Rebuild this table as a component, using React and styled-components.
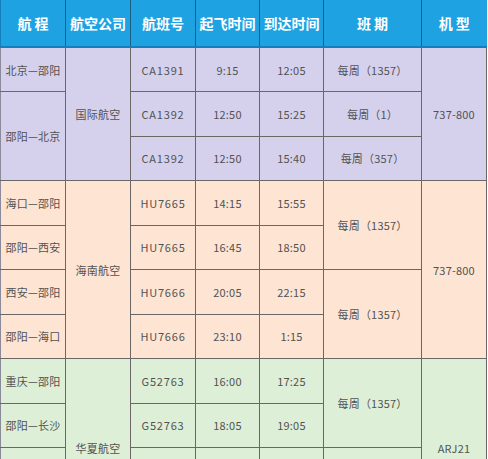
import React from "react";
import styled, { createGlobalStyle } from "styled-components";

const Global = createGlobalStyle`
  html, body { margin: 0; padding: 0; background: #ffffff; }
  body { width: 488px; height: 459px; overflow: hidden; }
`;

const tones = {
  head: "#1fa2e2",
  purple: "#d5d1ed",
  peach: "#fde4d3",
  green: "#ddefd6",
};

const Table = styled.table`
  border-collapse: collapse;
  table-layout: fixed;
  width: 486px;
  font-family: "Noto Sans CJK SC", "Noto Sans", sans-serif;
`;

const HeadRow = styled.tr`
  height: 47px;
`;

const HeadCell = styled.th`
  background: ${tones.head};
  color: #ffffff;
  font-size: 14px;
  font-weight: 700;
  text-align: center;
  padding: 0;
  border-left: 1px solid #1a5f86;
  border-bottom: 2px solid #1380bd;
  white-space: pre;
  &:first-child { border-left: 1px solid #137fbc; }
`;

const Row = styled.tr`
  height: 44.5px;
`;

const Cell = styled.td`
  background: ${(p) => tones[p.$tone]};
  color: #525252;
  font-size: 11px;
  letter-spacing: ${(p) => (p.$code ? "0.8px" : "0.2px")};
  text-align: center;
  vertical-align: middle;
  padding: 0;
  border: 1px solid #6b6766;
  white-space: nowrap;
  &:first-child { border-left: 1px solid #8a8a9a; }
`;

const cols = [65, 65, 65, 64, 64, 98, 65];
const headers = ["航 程", "航空公司", "航班号", "起飞时间", "到达时间", "班 期", "机 型"];

export default function App() {
  return (
    <>
      <Global />
      <Table>
        <colgroup>
          {cols.map((w, i) => (
            <col key={i} style={{ width: w }} />
          ))}
        </colgroup>
        <thead>
          <HeadRow>
            {headers.map((h) => (
              <HeadCell key={h}>{h}</HeadCell>
            ))}
          </HeadRow>
        </thead>
        <tbody>
          <Row>
            <Cell $tone="purple">北京—邵阳</Cell>
            <Cell $tone="purple" rowSpan={3}>国际航空</Cell>
            <Cell $tone="purple" $code>CA1391</Cell>
            <Cell $tone="purple">9:15</Cell>
            <Cell $tone="purple">12:05</Cell>
            <Cell $tone="purple">每周（1357）</Cell>
            <Cell $tone="purple" rowSpan={3}>737-800</Cell>
          </Row>
          <Row>
            <Cell $tone="purple" rowSpan={2}>邵阳—北京</Cell>
            <Cell $tone="purple" $code>CA1392</Cell>
            <Cell $tone="purple">12:50</Cell>
            <Cell $tone="purple">15:25</Cell>
            <Cell $tone="purple">每周（1）</Cell>
          </Row>
          <Row>
            <Cell $tone="purple" $code>CA1392</Cell>
            <Cell $tone="purple">12:50</Cell>
            <Cell $tone="purple">15:40</Cell>
            <Cell $tone="purple">每周（357）</Cell>
          </Row>

          <Row>
            <Cell $tone="peach">海口—邵阳</Cell>
            <Cell $tone="peach" rowSpan={4}>海南航空</Cell>
            <Cell $tone="peach" $code>HU7665</Cell>
            <Cell $tone="peach">14:15</Cell>
            <Cell $tone="peach">15:55</Cell>
            <Cell $tone="peach" rowSpan={2}>每周（1357）</Cell>
            <Cell $tone="peach" rowSpan={4}>737-800</Cell>
          </Row>
          <Row>
            <Cell $tone="peach">邵阳—西安</Cell>
            <Cell $tone="peach" $code>HU7665</Cell>
            <Cell $tone="peach">16:45</Cell>
            <Cell $tone="peach">18:50</Cell>
          </Row>
          <Row>
            <Cell $tone="peach">西安—邵阳</Cell>
            <Cell $tone="peach" $code>HU7666</Cell>
            <Cell $tone="peach">20:05</Cell>
            <Cell $tone="peach">22:15</Cell>
            <Cell $tone="peach" rowSpan={2}>每周（1357）</Cell>
          </Row>
          <Row>
            <Cell $tone="peach">邵阳—海口</Cell>
            <Cell $tone="peach" $code>HU7666</Cell>
            <Cell $tone="peach">23:10</Cell>
            <Cell $tone="peach">1:15</Cell>
          </Row>

          <Row>
            <Cell $tone="green">重庆—邵阳</Cell>
            <Cell $tone="green" rowSpan={4}>华夏航空</Cell>
            <Cell $tone="green" $code>G52763</Cell>
            <Cell $tone="green">16:00</Cell>
            <Cell $tone="green">17:25</Cell>
            <Cell $tone="green" rowSpan={2}>每周（1357）</Cell>
            <Cell $tone="green" rowSpan={4}>ARJ21</Cell>
          </Row>
          <Row>
            <Cell $tone="green">邵阳—长沙</Cell>
            <Cell $tone="green" $code>G52763</Cell>
            <Cell $tone="green">18:05</Cell>
            <Cell $tone="green">19:05</Cell>
          </Row>
          <Row>
            <Cell $tone="green" />
            <Cell $tone="green" />
            <Cell $tone="green" />
            <Cell $tone="green" />
            <Cell $tone="green" rowSpan={2} />
          </Row>
          <Row>
            <Cell $tone="green" />
            <Cell $tone="green" />
            <Cell $tone="green" />
            <Cell $tone="green" />
          </Row>
        </tbody>
      </Table>
    </>
  );
}
